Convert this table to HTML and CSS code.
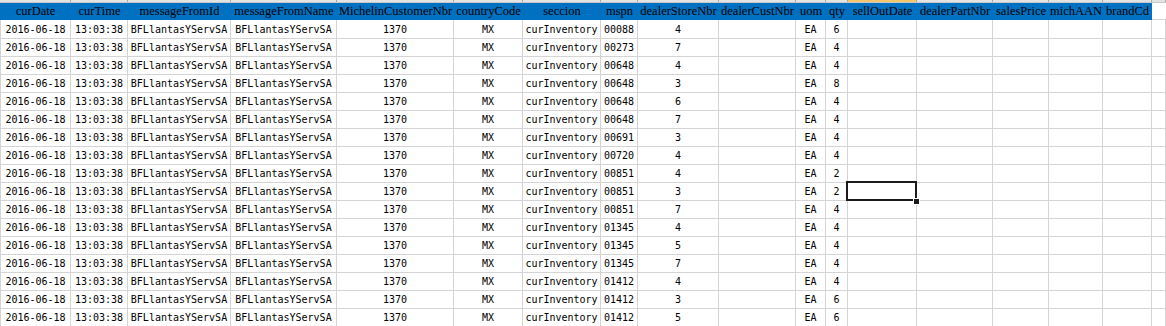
FILE: index.html
```html
<!DOCTYPE html>
<html lang="en">
<head>
<meta charset="utf-8">
<title>Sheet</title>
<link rel="stylesheet" href="styles.css">
</head>
<body>
<div class="sheet">
  <div class="row strip">
    <div></div><div></div><div></div><div></div><div></div><div></div><div></div><div></div><div></div><div></div><div></div><div></div><div class="hl"></div><div></div><div></div><div></div><div></div><div></div>
  </div>
  <div class="row head">
    <div>curDate</div><div>curTime</div><div>messageFromId</div><div>messageFromName</div><div>MichelinCustomerNbr</div><div>countryCode</div><div>seccion</div><div>mspn</div><div>dealerStoreNbr</div><div>dealerCustNbr</div><div>uom</div><div>qty</div><div>sellOutDate</div><div>dealerPartNbr</div><div>salesPrice</div><div>michAAN</div><div>brandCd</div><div class="blank"></div>
  </div>
  <div class="row data"><div>2016-06-18</div><div>13:03:38</div><div>BFLlantasYServSA</div><div>BFLlantasYServSA</div><div>1370</div><div>MX</div><div>curInventory</div><div>00088</div><div>4</div><div></div><div>EA</div><div>6</div><div></div><div></div><div></div><div></div><div></div><div></div></div>
  <div class="row data"><div>2016-06-18</div><div>13:03:38</div><div>BFLlantasYServSA</div><div>BFLlantasYServSA</div><div>1370</div><div>MX</div><div>curInventory</div><div>00273</div><div>7</div><div></div><div>EA</div><div>4</div><div></div><div></div><div></div><div></div><div></div><div></div></div>
  <div class="row data"><div>2016-06-18</div><div>13:03:38</div><div>BFLlantasYServSA</div><div>BFLlantasYServSA</div><div>1370</div><div>MX</div><div>curInventory</div><div>00648</div><div>4</div><div></div><div>EA</div><div>4</div><div></div><div></div><div></div><div></div><div></div><div></div></div>
  <div class="row data"><div>2016-06-18</div><div>13:03:38</div><div>BFLlantasYServSA</div><div>BFLlantasYServSA</div><div>1370</div><div>MX</div><div>curInventory</div><div>00648</div><div>3</div><div></div><div>EA</div><div>8</div><div></div><div></div><div></div><div></div><div></div><div></div></div>
  <div class="row data"><div>2016-06-18</div><div>13:03:38</div><div>BFLlantasYServSA</div><div>BFLlantasYServSA</div><div>1370</div><div>MX</div><div>curInventory</div><div>00648</div><div>6</div><div></div><div>EA</div><div>4</div><div></div><div></div><div></div><div></div><div></div><div></div></div>
  <div class="row data"><div>2016-06-18</div><div>13:03:38</div><div>BFLlantasYServSA</div><div>BFLlantasYServSA</div><div>1370</div><div>MX</div><div>curInventory</div><div>00648</div><div>7</div><div></div><div>EA</div><div>4</div><div></div><div></div><div></div><div></div><div></div><div></div></div>
  <div class="row data"><div>2016-06-18</div><div>13:03:38</div><div>BFLlantasYServSA</div><div>BFLlantasYServSA</div><div>1370</div><div>MX</div><div>curInventory</div><div>00691</div><div>3</div><div></div><div>EA</div><div>4</div><div></div><div></div><div></div><div></div><div></div><div></div></div>
  <div class="row data"><div>2016-06-18</div><div>13:03:38</div><div>BFLlantasYServSA</div><div>BFLlantasYServSA</div><div>1370</div><div>MX</div><div>curInventory</div><div>00720</div><div>4</div><div></div><div>EA</div><div>4</div><div></div><div></div><div></div><div></div><div></div><div></div></div>
  <div class="row data"><div>2016-06-18</div><div>13:03:38</div><div>BFLlantasYServSA</div><div>BFLlantasYServSA</div><div>1370</div><div>MX</div><div>curInventory</div><div>00851</div><div>4</div><div></div><div>EA</div><div>2</div><div></div><div></div><div></div><div></div><div></div><div></div></div>
  <div class="row data"><div>2016-06-18</div><div>13:03:38</div><div>BFLlantasYServSA</div><div>BFLlantasYServSA</div><div>1370</div><div>MX</div><div>curInventory</div><div>00851</div><div>3</div><div></div><div>EA</div><div>2</div><div class="sel"></div><div></div><div></div><div></div><div></div><div></div></div>
  <div class="row data"><div>2016-06-18</div><div>13:03:38</div><div>BFLlantasYServSA</div><div>BFLlantasYServSA</div><div>1370</div><div>MX</div><div>curInventory</div><div>00851</div><div>7</div><div></div><div>EA</div><div>4</div><div></div><div></div><div></div><div></div><div></div><div></div></div>
  <div class="row data"><div>2016-06-18</div><div>13:03:38</div><div>BFLlantasYServSA</div><div>BFLlantasYServSA</div><div>1370</div><div>MX</div><div>curInventory</div><div>01345</div><div>4</div><div></div><div>EA</div><div>4</div><div></div><div></div><div></div><div></div><div></div><div></div></div>
  <div class="row data"><div>2016-06-18</div><div>13:03:38</div><div>BFLlantasYServSA</div><div>BFLlantasYServSA</div><div>1370</div><div>MX</div><div>curInventory</div><div>01345</div><div>5</div><div></div><div>EA</div><div>4</div><div></div><div></div><div></div><div></div><div></div><div></div></div>
  <div class="row data"><div>2016-06-18</div><div>13:03:38</div><div>BFLlantasYServSA</div><div>BFLlantasYServSA</div><div>1370</div><div>MX</div><div>curInventory</div><div>01345</div><div>7</div><div></div><div>EA</div><div>4</div><div></div><div></div><div></div><div></div><div></div><div></div></div>
  <div class="row data"><div>2016-06-18</div><div>13:03:38</div><div>BFLlantasYServSA</div><div>BFLlantasYServSA</div><div>1370</div><div>MX</div><div>curInventory</div><div>01412</div><div>4</div><div></div><div>EA</div><div>4</div><div></div><div></div><div></div><div></div><div></div><div></div></div>
  <div class="row data"><div>2016-06-18</div><div>13:03:38</div><div>BFLlantasYServSA</div><div>BFLlantasYServSA</div><div>1370</div><div>MX</div><div>curInventory</div><div>01412</div><div>3</div><div></div><div>EA</div><div>6</div><div></div><div></div><div></div><div></div><div></div><div></div></div>
  <div class="row data"><div>2016-06-18</div><div>13:03:38</div><div>BFLlantasYServSA</div><div>BFLlantasYServSA</div><div>1370</div><div>MX</div><div>curInventory</div><div>01412</div><div>5</div><div></div><div>EA</div><div>6</div><div></div><div></div><div></div><div></div><div></div><div></div></div>
</div>
</body>
</html>
```
FILE: styles.css
```css
html, body {
  margin: 0;
  padding: 0;
  background: #ffffff;
}
body {
  width: 1166px;
  height: 326px;
  overflow: hidden;
}
.sheet {
  display: flex;
  flex-direction: column;
}
.row {
  display: grid;
  grid-template-columns: 71px 57px 103px 106px 117px 69px 78px 37px 81px 77px 30px 22px 69px 76px 56px 54px 49px 14px;
}
.row > div {
  box-sizing: border-box;
  white-space: nowrap;
  display: flex;
  justify-content: center;
  align-items: center;
  min-width: 0;
}
.strip {
  height: 3px;
  background: #e3e3e3;
  border-bottom: 1px solid #c8c8c8;
  box-sizing: border-box;
}
.strip > div {
  border-right: 1px solid #a9a9a9;
}
.strip > .hl {
  background: #f5c76c;
}
.head {
  height: 17px;
}
.head > div {
  background: #0070c0;
  color: #000000;
  font-family: "Liberation Serif", "Times New Roman", serif;
  font-size: 12.5px;
  line-height: 17px;
}
.head > .blank {
  background: #ffffff;
  border-bottom: 1px solid #d4d4d4;
}
.data {
  height: 18px;
}
.data > div {
  border-right: 1px solid #d4d4d4;
  border-bottom: 1px solid #d4d4d4;
  font-family: "DejaVu Sans Mono", "Liberation Mono", monospace;
  font-size: 10px;
  line-height: 17px;
  color: #000000;
  padding-top: 1px;
}
.data > div:first-child {
  border-left: 1px solid #d4d4d4;
}
.data > .sel {
  position: relative;
  z-index: 2;
}
.data > .sel::after {
  content: "";
  position: absolute;
  left: -2px;
  top: -1px;
  right: -1px;
  bottom: -1px;
  border: 2px solid #1b1b1b;
}
.data > .sel::before {
  content: "";
  position: absolute;
  right: -3px;
  bottom: -4px;
  width: 5px;
  height: 5px;
  background: #1b1b1b;
  outline: 1px solid #ffffff;
  z-index: 3;
}
```
